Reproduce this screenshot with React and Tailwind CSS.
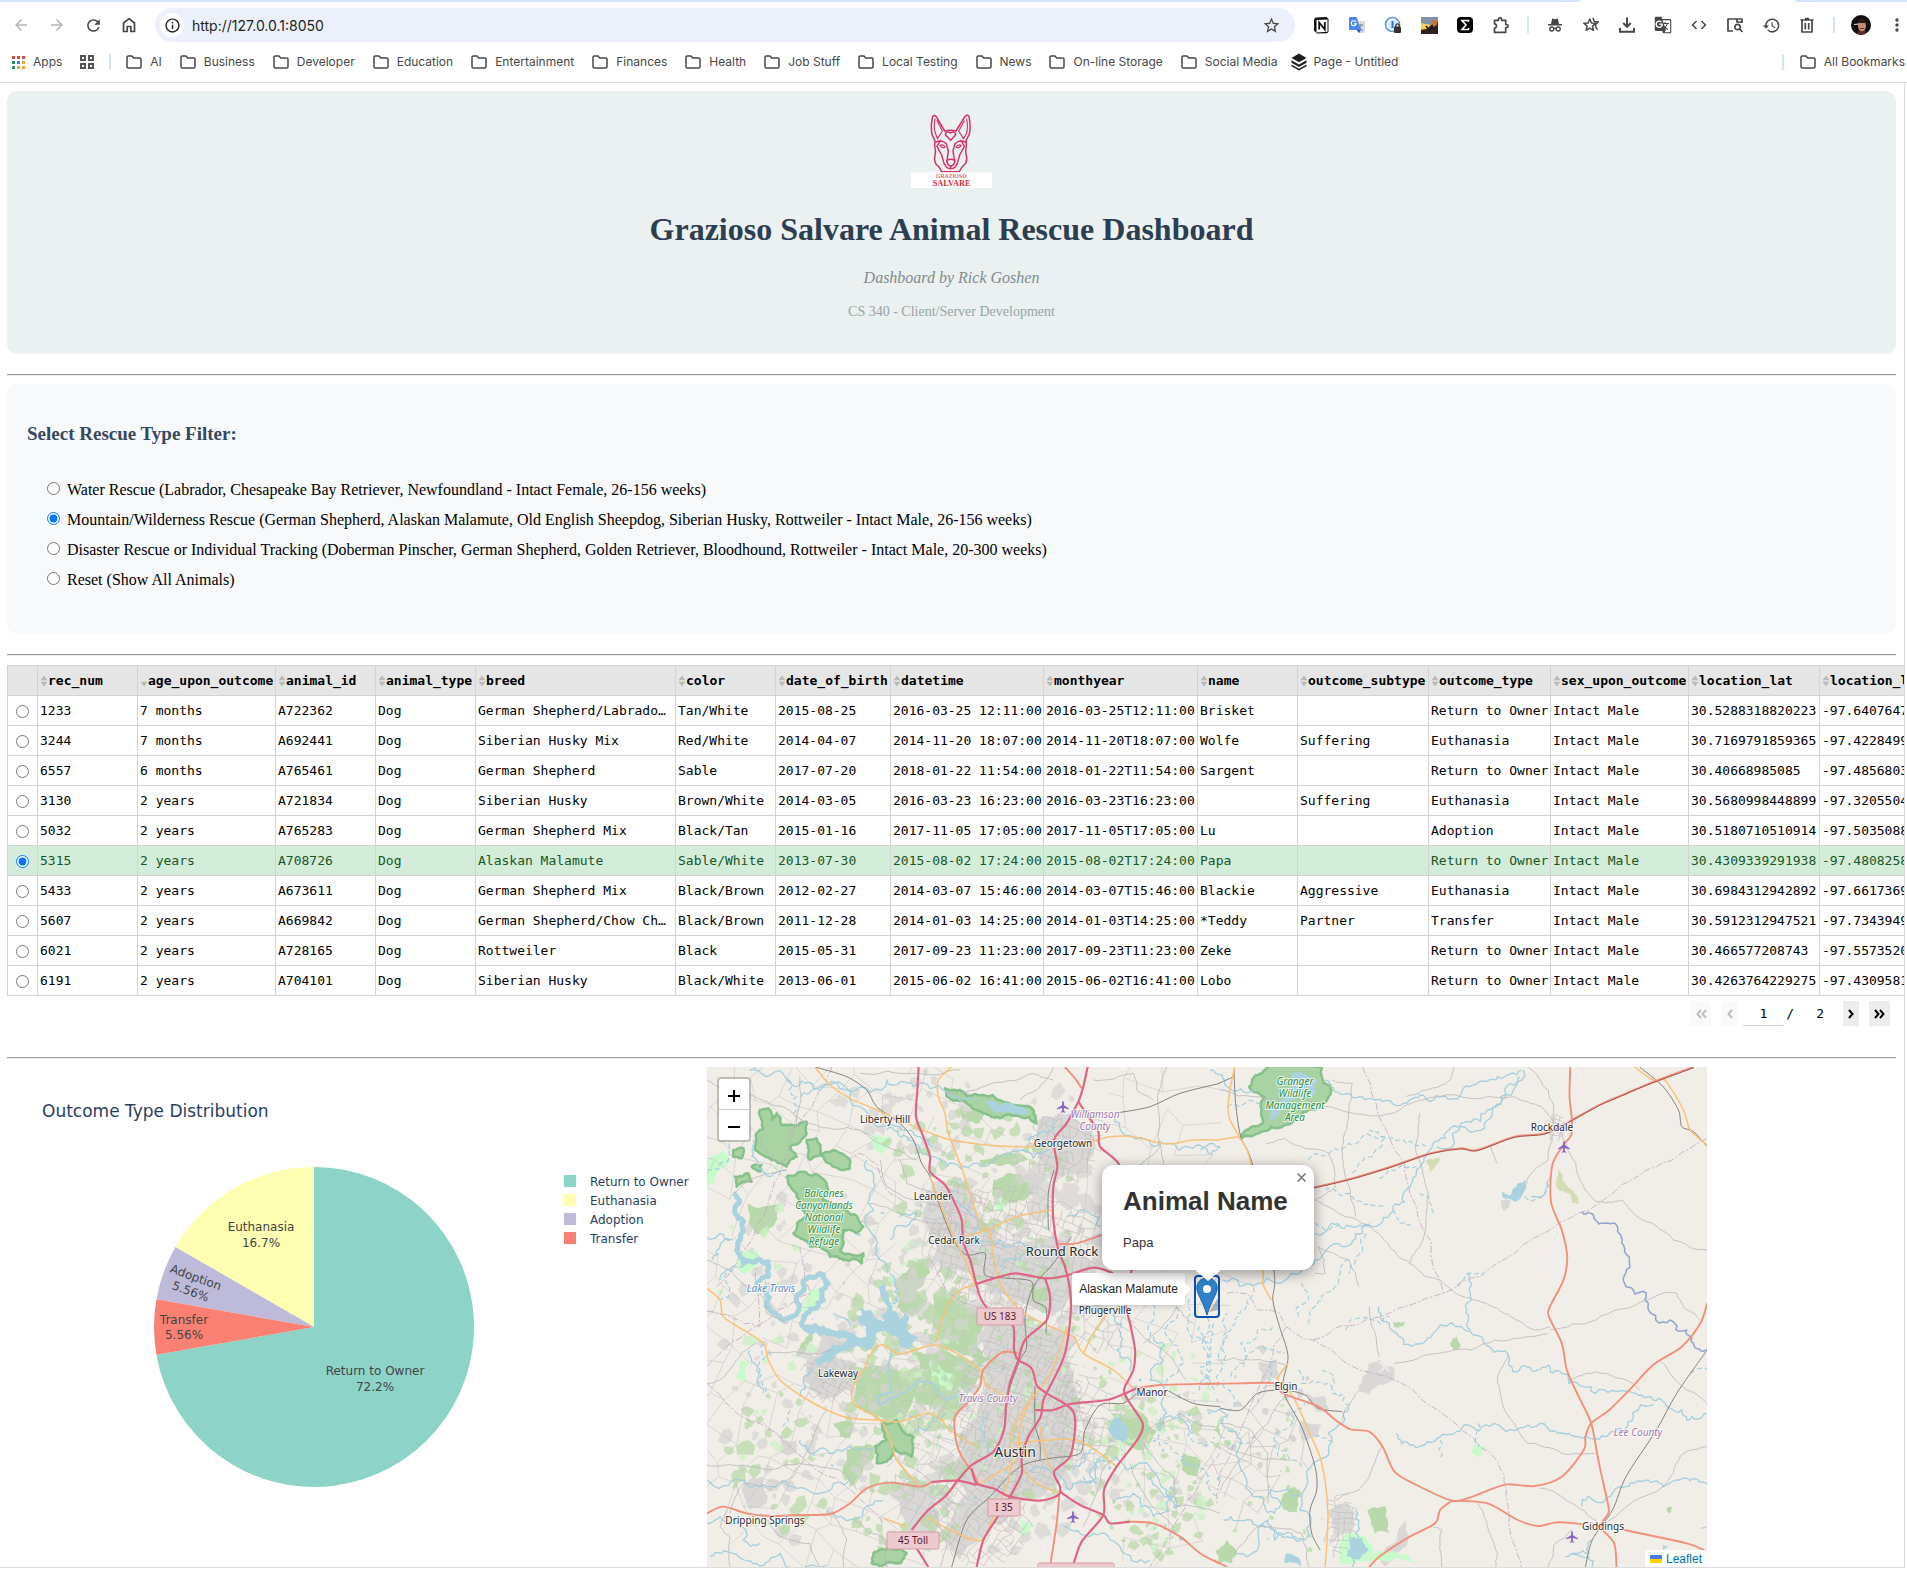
import React from "react";
import {
  MdArrowBack, MdArrowForward, MdRefresh, MdInfoOutline, MdStarBorder, MdCode,
  MdHistory, MdMoreVert, MdLocalAirport, MdGTranslate,
} from "react-icons/md";

/* ------------------------------ browser chrome ------------------------------ */

const stroke = { fill: "none", stroke: "currentColor", strokeWidth: 1.7, strokeLinejoin: "round" };

const Folder = () => (
  <svg width="16" height="14" viewBox="0 0 16 14" {...stroke} strokeWidth="1.5">
    <path d="M1 2.2c0-.7.5-1.2 1.200-1.200H6l1.700 1.900h6.100c.7 0 1.200.5 1.200 1.200v7.700c0 .7-.5 1.200-1.200 1.200H2.200C1.500 13 1 12.500 1 11.800z" />
  </svg>
);
const Home = () => (
  <svg width="18" height="18" viewBox="0 0 18 18" {...stroke}>
    <path d="M3.500 7 9 2.700 14.500 7v8.500h-3.700v-5H7.200v5H3.500z" />
  </svg>
);
const Notion = () => (
  <svg width="18" height="18" viewBox="0 0 18 18">
    <path d="M2 3l2-1.500 10.500-.5L16.500 3v13L15 17.300 5 17.500 2 14.500z" fill="#111" />
    <path d="M4.500 4 15.500 3.400V15.800L4.500 16.500z" fill="#fff" />
    <path d="M7.200 13.500V6.500l5.600 7V6" fill="none" stroke="#111" strokeWidth="1.800" />
  </svg>
);
const TranslateBlue = () => (
  <svg width="18" height="18" viewBox="0 0 18 18">
    <path d="M7 5h9a1 1 0 0 1 1 1v10a1 1 0 0 1-1 1h-5z" fill="#dadce0" />
    <path d="M10.500 9h5M13 8v1c0 2-1 3.500-3 5M11.500 11c1 2 2 3 3.500 3.500" stroke="#7b8794" fill="none" />
    <path d="M2 1h6.500L13 14H2a1 1 0 0 1-1-1V2a1 1 0 0 1 1-1z" fill="#4d86ec" />
    <path d="M7.800 5.800A2.500 2.500 0 1 0 8.200 7.800H6" stroke="#fff" fill="none" strokeWidth="1.200" />
    <path d="m8.500 14 2.500 3 2-3z" fill="#2859b8" />
  </svg>
);
const OnePassword = () => (
  <svg width="18" height="18" viewBox="0 0 18 18">
    <circle cx="8.500" cy="8.500" r="7" fill="#fff" stroke="#5b9be6" strokeWidth="1.700" />
    <circle cx="8.500" cy="8.500" r="4.800" fill="#dcebfb" />
    <path d="M8.500 5v7" stroke="#2675cf" strokeWidth="2" />
    <rect x="10" y="10.500" width="7" height="6.500" rx="1" fill="#333" />
    <path d="M11.800 11V9.500a1.700 1.700 0 0 1 3.400 0V11" fill="none" stroke="#333" strokeWidth="1.300" />
  </svg>
);
const Sunset = () => (
  <svg width="17" height="17" viewBox="0 0 17 17">
    <rect width="17" height="17" fill="#e8a33a" />
    <path d="M0 0h17v5L9 8 0 7z" fill="#7e93a8" />
    <path d="M0 6 10 8v3L0 12z" fill="#f6d35a" />
    <path d="M0 17v-4l6-1 4-4 7-3v12z" fill="#2b2220" />
    <path d="m5 9 3 4M9 13l3-5" stroke="#201815" strokeWidth="1.500" />
    <path d="M11 3h5v5l-4 2z" fill="#c9762c" />
  </svg>
);
const Sigma = () => (
  <svg width="18" height="18" viewBox="0 0 18 18">
    <rect x="1" y="1" width="16" height="16" rx="4" fill="#000" />
    <path d="M12.500 6V4.500H6L10 9l-4 4.500h6.500V12" fill="none" stroke="#fff" strokeWidth="1.600" />
  </svg>
);
const Puzzle = () => (
  <svg width="18" height="18" viewBox="0 0 18 18" {...stroke}>
    <path d="M2.500 4.300h4V3.500a1.600 1.600 0 0 1 3.200 0v.8h4v4.200h.8a1.600 1.600 0 0 1 0 3.200h-.8v4.600H2.500v-4.100c2.600-.4 2.600-4 0-4.400z" />
  </svg>
);
const Incognito = () => (
  <svg width="18" height="18" viewBox="0 0 18 18" fill="#474747">
    <path d="M6.200 2.500 9 3.200l2.800-.7L13 8H5z" />
    <path d="M2 8h14v1.500H2z" />
    <g fill="none" stroke="#474747" strokeWidth="1.400">
      <circle cx="5.800" cy="13" r="2" />
      <circle cx="12.200" cy="13" r="2" />
      <path d="M7.800 12.700c.8-.6 1.600-.6 2.400 0" />
    </g>
  </svg>
);
const StarPlus = () => (
  <svg width="18" height="18" viewBox="0 0 18 18" {...stroke} strokeWidth="1.500">
    <path d="m7.800 3 1.700 4 4.300.3-3.300 2.800 1 4.200-3.700-2.200-3.700 2.200 1-4.200L1.800 7.300 6.100 7z" />
    <path d="m11 1.800 1.200 3.700 4.300.4-3.200 2.700.8 3.400 1.600 1.500" />
  </svg>
);
const Download = () => (
  <svg width="18" height="18" viewBox="0 0 18 18" {...stroke} strokeWidth="2">
    <path d="M9 1.500v9M5.200 7 9 10.800 12.800 7M2 12v3.800h14V12" strokeLinejoin="miter" />
  </svg>
);
const SearchTab = () => (
  <svg width="18" height="18" viewBox="0 0 18 18" {...stroke}>
    <path d="M7 15H2V3h14v4M11 3v3h5" />
    <circle cx="11.500" cy="11" r="2.700" />
    <path d="m13.500 13 3 3" />
  </svg>
);
const Trash = () => (
  <svg width="18" height="18" viewBox="0 0 18 18" {...stroke}>
    <path d="M4 4.500V16h10V4.500M2.500 4h13M7 2.500h4M7.300 7v6.500M10.700 7v6.500" />
  </svg>
);
const Avatar = () => (
  <svg width="20" height="20" viewBox="0 0 20 20">
    <clipPath id="avatar"><circle cx="10" cy="10" r="10" /></clipPath>
    <g clipPath="url(#avatar)">
      <rect width="20" height="20" fill="#120d0d" />
      <path d="M6 20c0-4 2-5 5-5s6 2 6 5z" fill="#5a2c28" />
      <ellipse cx="11" cy="11" rx="4" ry="5.300" fill="#c88a75" />
      <path d="M6.500 8c0-6 9-6 9 0z" fill="#2a1a18" />
      <path d="M3 9.500l5-.5" stroke="#ddd" />
      <path d="M9 13.500h4" stroke="#7d3c34" />
    </g>
  </svg>
);
const Stack = () => (
  <svg width="16" height="18" viewBox="0 0 16 18" fill="#1f1f1f">
    <path d="m8 .5 7.500 4.500L8 9.300.5 5z" />
    <path d="M.5 7.300 8 11.600l7.500-4.300v2.400L8 14 .5 9.700z" />
    <path d="m.5 11.500 7.500 4.200 7.500-4.200v1.800L8 17.500.5 13.300z" />
  </svg>
);

const TOOLS = [
  ["Notion", <Notion />], ["Google Translate", <TranslateBlue />], ["1Password", <OnePassword />],
  ["Wallpaper", <Sunset />], ["Sigma", <Sigma />], ["Extensions", <Puzzle />],
];
const ACTIONS = [
  ["Incognito", <Incognito />], ["Add to favourites", <StarPlus />], ["Downloads", <Download />],
  ["Translate page", <MdGTranslate size={18} />], ["Developer tools", <MdCode size={18} />],
  ["Search tabs", <SearchTab />], ["History", <MdHistory size={19} />], ["Clear data", <Trash />],
];
const BOOKMARKS = [
  "AI", "Business", "Developer", "Education", "Entertainment", "Finances", "Health",
  "Job Stuff", "Local Testing", "News", "On-line Storage", "Social Media",
];
const APP_COLORS = ["#d64b41", "#d64b41", "#d64b41", "#2f8f5b", "#3f7fe0", "#e9a83a", "#2f8f5b", "#e9a83a", "#e9a83a"];

function IconButton({ label, children, className = "" }) {
  return (
    <button type="button" aria-label={label} className={"flex h-6 w-9 shrink-0 items-center justify-center " + className}>
      {children}
    </button>
  );
}

function Chrome() {
  return (
    <header className="border-b border-[#d9dbde] bg-white font-['Inter',sans-serif] text-[#474747]">
      <div className="flex h-[2px]">
        <div className="flex-1 rounded-br bg-[#d3e3fd]" />
        <div className="w-[215px]" />
        <div className="w-28 rounded-bl bg-[#d3e3fd]" />
      </div>
      <div className="flex h-[46px] items-center pl-[3px]">
        <IconButton label="Back" className="text-[#b4b4b4]"><MdArrowBack size={18} /></IconButton>
        <IconButton label="Forward" className="text-[#b4b4b4]"><MdArrowForward size={18} /></IconButton>
        <IconButton label="Reload"><MdRefresh size={19} /></IconButton>
        <IconButton label="Home"><Home /></IconButton>
        <div className="ml-2 flex h-[34px] flex-1 items-center rounded-full bg-[#ebf0fa] pl-[5px]">
          <button type="button" aria-label="Site information" className="flex size-6 items-center justify-center rounded-full bg-white text-[#1f1f1f]">
            <MdInfoOutline size={17} />
          </button>
          <input aria-label="Address" defaultValue="http://127.0.0.1:8050" className="ml-2 min-w-0 flex-1 bg-transparent text-[14px] text-[#1f1f1f] outline-none" />
          <IconButton label="Bookmark this page" className="mr-[6px]"><MdStarBorder size={19} /></IconButton>
        </div>
        <div className="ml-2 flex items-center">
          {TOOLS.map(([n, icon]) => <IconButton key={n} label={n}>{icon}</IconButton>)}
          <div className="mx-2 h-4 w-[2px] bg-[#d3e3fd]" />
          {ACTIONS.map(([n, icon]) => <IconButton key={n} label={n}>{icon}</IconButton>)}
          <div className="mx-2 h-4 w-[2px] bg-[#d3e3fd]" />
          <IconButton label="Profile"><Avatar /></IconButton>
          <button type="button" aria-label="Menu" className="flex h-6 w-7 shrink-0 items-center justify-center pl-2"><MdMoreVert size={20} /></button>
        </div>
      </div>
      <nav className="flex h-[34px] items-center pb-[6px] pl-3 text-[12px]">
        <a href="#apps" className="flex items-center gap-2">
          <span className="grid size-[13px] grid-cols-3 gap-[2px]">
            {APP_COLORS.map((c, i) => <span key={i} style={{ background: c }} />)}
          </span>
          Apps
        </a>
        <a href="#groups" aria-label="Tab groups" className="ml-[18px] grid size-[14px] grid-cols-2 gap-[2px]">
          {[0, 1, 2, 3].map((i) => <span key={i} className="border-2 border-[#555]" />)}
        </a>
        <div className="mx-[15px] h-4 w-[2px] bg-[#d3e3fd]" />
        <div className="flex flex-1 items-center gap-[18px]">
          {BOOKMARKS.map((b) => (
            <a key={b} href={"#" + b} className="flex shrink-0 items-center gap-2 whitespace-nowrap"><Folder />{b}</a>
          ))}
          <a href="#page" className="-ml-1 flex shrink-0 items-center gap-[6px] whitespace-nowrap"><Stack />Page - Untitled</a>
        </div>
        <div className="mx-4 h-4 w-[2px] bg-[#d3e3fd]" />
        <a href="#all" className="mr-[2px] flex items-center gap-2 whitespace-nowrap"><Folder />All Bookmarks</a>
      </nav>
    </header>
  );
}

/* ---------------------------------- logo ---------------------------------- */

function Logo() {
  return (
    <svg width="81" height="80" viewBox="0 0 243 240" role="img" aria-label="Grazioso Salvare">
      <g fill="none" stroke="#d03468" strokeWidth="4.500" strokeLinejoin="round" strokeLinecap="round">
        <path d="M101 60 76 17Q70 10 65 17 58 45 63 70L72 90 71 106Q75 118 73 130 68 142 74 158L84 168 92 182H145L153 168 165 156Q170 142 165 130 163 116 166 104L165 88 175 70Q180 45 174 16 168 9 161 18L135 60Q118 56 101 60Z" />
        <path d="M72 24Q67 50 73 66L80 84M78 28 94 60 80 82M167 24Q172 50 166 68L157 84M160 30 143 60 157 82" strokeWidth="3.500" />
        <path d="M104 66Q112 60 118 66 126 60 133 66 136 72 128 78L119 88 110 78Q101 72 104 66Z" />
        <path d="M73 94Q92 84 106 98L112 120 108 150M165 94Q146 84 132 98L126 120 131 150M88 88 78 106 92 132 100 160M150 88 160 106 146 132 138 160" />
        <path d="M87 103Q97 98 103 108 95 114 87 103ZM151 103Q141 98 135 108 143 114 151 103Z" strokeWidth="3.500" />
        <path d="M108 148Q119 142 131 148 132 158 124 164H115Q107 158 108 148ZM119 164V172M102 160Q105 172 119 173 134 172 137 160" />
      </g>
      <rect y="184" width="243" height="47" fill="#fff" />
      <g fontFamily="Liberation Serif, serif" fontWeight="bold" textAnchor="middle">
        <text x="121" y="201" fontSize="17" fill="#dc6470">GRAZIOSO</text>
        <text x="122" y="225" fontSize="25" fill="#d8303c">SALVARE</text>
      </g>
    </svg>
  );
}

/* ---------------------------------- table ---------------------------------- */

const COLS = [
  ["rec_num", 100], ["age_upon_outcome", 138], ["animal_id", 100], ["animal_type", 100], ["breed", 200],
  ["color", 100], ["date_of_birth", 115], ["datetime", 153], ["monthyear", 154], ["name", 100],
  ["outcome_subtype", 131], ["outcome_type", 122], ["sex_upon_outcome", 138], ["location_lat", 131], ["location_long", 139],
];
const TABLE_WIDTH = COLS.reduce((sum, [, w]) => sum + w, 30);
const ROWS = [
  ["1233", "7 months", "A722362", "German Shepherd/Labrador Retriever", "Tan/White", "2015-08-25", "2016-03-25", "12:11:00", "Brisket", "", "Return to Owner", "30.5288318820223", "-97.6407647"],
  ["3244", "7 months", "A692441", "Siberian Husky Mix", "Red/White", "2014-04-07", "2014-11-20", "18:07:00", "Wolfe", "Suffering", "Euthanasia", "30.7169791859365", "-97.4228499"],
  ["6557", "6 months", "A765461", "German Shepherd", "Sable", "2017-07-20", "2018-01-22", "11:54:00", "Sargent", "", "Return to Owner", "30.40668985085", "-97.4856803"],
  ["3130", "2 years", "A721834", "Siberian Husky", "Brown/White", "2014-03-05", "2016-03-23", "16:23:00", "", "Suffering", "Euthanasia", "30.5680998448899", "-97.3205504"],
  ["5032", "2 years", "A765283", "German Shepherd Mix", "Black/Tan", "2015-01-16", "2017-11-05", "17:05:00", "Lu", "", "Adoption", "30.5180710510914", "-97.5035088"],
  ["5315", "2 years", "A708726", "Alaskan Malamute", "Sable/White", "2013-07-30", "2015-08-02", "17:24:00", "Papa", "", "Return to Owner", "30.4309339291938", "-97.4808258"],
  ["5433", "2 years", "A673611", "German Shepherd Mix", "Black/Brown", "2012-02-27", "2014-03-07", "15:46:00", "Blackie", "Aggressive", "Euthanasia", "30.6984312942892", "-97.6617369"],
  ["5607", "2 years", "A669842", "German Shepherd/Chow Chow", "Black/Brown", "2011-12-28", "2014-01-03", "14:25:00", "*Teddy", "Partner", "Transfer", "30.5912312947521", "-97.7343949"],
  ["6021", "2 years", "A728165", "Rottweiler", "Black", "2015-05-31", "2017-09-23", "11:23:00", "Zeke", "", "Return to Owner", "30.466577208743", "-97.5573520"],
  ["6191", "2 years", "A704101", "Siberian Husky", "Black/White", "2013-06-01", "2015-06-02", "16:41:00", "Lobo", "", "Return to Owner", "30.4263764229275", "-97.4309581"],
];

function DataTable() {
  return (
    <table style={{ width: TABLE_WIDTH }} className="mt-[9px] table-fixed border-collapse font-['DejaVu_Sans_Mono','Liberation_Mono',monospace] text-[13px] leading-5 text-black">
      <colgroup>
        <col style={{ width: 30 }} />
        {COLS.map(([n, w]) => <col key={n} style={{ width: w }} />)}
      </colgroup>
      <thead>
        <tr className="h-[30px] bg-[#e6e6e6]">
          <th className="border border-[#d3d3d3]" aria-label="Select" />
          {COLS.map(([n]) => (
            <th key={n} scope="col" className="border border-[#d3d3d3] pl-[2px] text-left font-bold whitespace-nowrap">
              <button type="button" className="flex items-center">
                <svg width="8" height="12" viewBox="0 0 8 12" fill="#b9b9b9" className="shrink-0">
                  {n !== "age_upon_outcome" && <path d="M.5 5.200 4 .5l3.500 4.700z" />}
                  <path d="M.5 6.800 4 11.500l3.500-4.700z" />
                </svg>
                {n}
              </button>
            </th>
          ))}
        </tr>
      </thead>
      <tbody>
        {ROWS.map((r) => {
          const on = r[0] === "5315";
          const cells = [r[0], r[1], r[2], "Dog", r[3], r[4], r[5], r[6] + " " + r[7], r[6] + "T" + r[7], r[8], r[9], r[10], "Intact Male", r[11], r[12]];
          return (
            <tr key={r[0]} className={on ? "h-[30px] bg-[#d4edda] text-[#155724]" : "h-[30px]"}>
              <td className="border border-[#d3d3d3]">
                <input type="radio" name="row" aria-label={"Select record " + r[0]} defaultChecked={on} className="mx-auto mt-[2px] block size-[13px]" />
              </td>
              {cells.map((c, i) => (
                <td key={i} className={"border border-[#d3d3d3] pl-[2px] whitespace-nowrap" + (i === 4 ? " overflow-hidden pr-1 text-ellipsis" : "")}>{c}</td>
              ))}
            </tr>
          );
        })}
      </tbody>
    </table>
  );
}

function Pagination() {
  const btn = "flex h-[25px] items-center justify-center ";
  const chev = (double) => (
    <svg width={double ? 12 : 6} height="10" viewBox={double ? "0 0 12 10" : "0 0 6 10"} fill="none" stroke="currentColor" strokeWidth="2">
      <path d="m1 1 3.500 4L1 9" />
      {double && <path d="m6 1 3.500 4L6 9" />}
    </svg>
  );
  return (
    <div className="mt-[5px] flex items-center justify-end pr-[6px] font-['DejaVu_Sans_Mono',monospace] text-[13px] text-black">
      <button type="button" aria-label="First page" disabled className={btn + "w-[21px] bg-[#fafafa] text-[#bdbdbd]"}><span className="rotate-180">{chev(true)}</span></button>
      <button type="button" aria-label="Previous page" disabled className={btn + "ml-[10px] w-[17px] bg-[#fafafa] text-[#bdbdbd]"}><span className="rotate-180">{chev(false)}</span></button>
      <input aria-label="Page" defaultValue="1" className="ml-[5px] h-[25px] w-10 border-b border-[#cfcfcf] bg-transparent text-center outline-none" />
      <span className="ml-[3px]">/</span>
      <span className="mr-[19px] ml-[22px]">2</span>
      <button type="button" aria-label="Next page" className={btn + "w-4 bg-[#ededed]"}>{chev(false)}</button>
      <button type="button" aria-label="Last page" className={btn + "ml-[10px] w-[21px] bg-[#ededed]"}>{chev(true)}</button>
    </div>
  );
}

/* ----------------------------------- pie ----------------------------------- */

const SLICES = [
  ["Return to Owner", 0, 260, "#8dd3c7"],
  ["Euthanasia", 300, 360, "#ffffb3"],
  ["Adoption", 280, 300, "#bebada"],
  ["Transfer", 260, 280, "#f98072"],
];
const polar = (deg) => {
  const a = (deg * Math.PI) / 180;
  return `${307 + 160 * Math.sin(a)} ${260 - 160 * Math.cos(a)}`;
};

function Pie() {
  return (
    <svg width="700" height="500" viewBox="0 0 700 500" role="img" aria-label="Outcome Type Distribution" className="shrink-0" fontFamily="DejaVu Sans, Verdana, sans-serif" fontSize="12">
      <text x="35" y="50" fontSize="17" fill="#2a3f5f">Outcome Type Distribution</text>
      {SLICES.map(([n, a, b, c]) => (
        <path key={n} d={`M307 260L${polar(a)}A160 160 0 ${b - a > 180 ? 1 : 0} 1 ${polar(b)}Z`} fill={c} />
      ))}
      <g fill="#444" textAnchor="middle">
        <text x="368" y="308">Return to Owner</text>
        <text x="368" y="324">72.2%</text>
        <text x="254" y="164">Euthanasia</text>
        <text x="254" y="180">16.7%</text>
        <text x="177" y="257">Transfer</text>
        <text x="177" y="272">5.56%</text>
        <g transform="rotate(20 186 218)">
          <text x="186" y="214">Adoption</text>
          <text x="186" y="229">5.56%</text>
        </g>
      </g>
      {SLICES.map(([n, , , c], i) => (
        <g key={n}>
          <rect x="557" y={108 + i * 19} width="12" height="12" fill={c} />
          <text x="583" y={119 + i * 19} fill="#2a3f5f">{n}</text>
        </g>
      ))}
    </svg>
  );
}

/* ----------------------------------- map ----------------------------------- */

function rng(seed) {
  let s = seed >>> 0;
  return () => {
    s = (s * 1664525 + 1013904223) >>> 0;
    return s / 4294967296;
  };
}
const parse = (str) => str.trim().split(/\s+/).map((p) => p.split(",").map(Number));

/* Splits every segment at a displaced midpoint, which gives streams and shores their wobble. */
function wobble(str, amp, closed) {
  let pts = parse(str);
  if (closed) pts = [...pts, pts[0]];
  const r = rng(pts[0][0] * 31 + pts[0][1] * 17 + pts.length);
  for (let k = 0; k < 3; k++) {
    const out = [pts[0]];
    for (let i = 1; i < pts.length; i++) {
      const [x0, y0] = pts[i - 1];
      const [x1, y1] = pts[i];
      const d = Math.hypot(x1 - x0, y1 - y0);
      const o = (r() - 0.5) * amp * d;
      if (d > 9) out.push([(x0 + x1) / 2 - ((y1 - y0) / d) * o, (y0 + y1) / 2 + ((x1 - x0) / d) * o]);
      out.push(pts[i]);
    }
    pts = out;
  }
  return "M" + pts.map((p) => p.map((v) => Math.round(v)).join(" ")).join("L") + (closed ? "Z" : "");
}
/* Smooth curve through the given points. */
function smooth(str) {
  const p = parse(str);
  let d = `M${p[0]}`;
  for (let i = 1; i < p.length; i++) {
    const a = p[i - 2] || p[i - 1], b = p[i - 1], c = p[i], e = p[i + 1] || c;
    d += `C${b[0] + (c[0] - a[0]) / 7} ${b[1] + (c[1] - a[1]) / 7} ${c[0] - (e[0] - b[0]) / 7} ${c[1] - (e[1] - b[1]) / 7} ${c[0]} ${c[1]}`;
  }
  return d;
}
/* Patches scattered over an ellipse. */
function patches(cx, cy, rx, ry, n, size, seed) {
  const r = rng(seed);
  let d = "";
  for (let i = 0; i < n; i++) {
    const a = r() * 6.28, q = Math.sqrt(r());
    const x = cx + Math.cos(a) * rx * q, y = cy + Math.sin(a) * ry * q;
    const s = size * (0.4 + r());
    const t = r() * 1.2;
    const k = 5 + Math.floor(r() * 4);
    let seg = "";
    for (let j = 0; j < k; j++) {
      const b = t + (j / k) * 6.28, m = s * (0.4 + r() * 0.8);
      seg += (j ? "L" : "M") + Math.round(x + Math.cos(b) * m) + " " + Math.round(y + Math.sin(b) * m);
    }
    d += seg + "Z";
  }
  return d;
}
/* Slanted street grid over an ellipse with bends and missing blocks. */
function streets(cx, cy, rx, ry, step, tilt, seed) {
  const r = rng(seed);
  const n = Math.ceil(Math.max(rx, ry) / step);
  const c = Math.cos(tilt), s = Math.sin(tilt);
  const node = {};
  const at = (i, j) => {
    const key = i + "," + j;
    if (!node[key]) {
      const u = (i + (r() - 0.5) * 0.7) * step, v = (j + (r() - 0.5) * 0.7) * step;
      node[key] = [Math.round(cx + u * c - v * s), Math.round(cy + u * s + v * c)];
    }
    return node[key];
  };
  const inside = ([x, y]) => ((x - cx) / rx) ** 2 + ((y - cy) / ry) ** 2 < 1;
  let d = "";
  for (let i = -n; i <= n; i++)
    for (let j = -n; j <= n; j++) {
      const p = at(i, j);
      if (!inside(p)) continue;
      if (r() < 0.75) d += `M${p[0]} ${p[1]}L${at(i + 1, j).join(" ")}`;
      if (r() < 0.75) d += `M${p[0]} ${p[1]}L${at(i, j + 1).join(" ")}`;
    }
  return d;
}

const W = {
  motorway: [
    "656,21 652,90 648,170 668,225 690,290 690,335 735,375 765,430 785,480 790,545 812,605 828,670 842,715 862,745 900,780 940,800 942,870 955,900 995,925 1010,975 1040,1000 1100,1035 1122,1060 1125,1110 1110,1190 1062,1235 1080,1280 1075,1305 1020,1322 930,1310 880,1285 830,1270 815,1225",
    "1163,21 1150,80 1135,125 1100,190 1062,240 1072,320 1060,380 1060,480 1075,570 1095,620 1110,690 1112,760 1095,880 1060,960 1030,1020 1022,1070 985,1130 965,1190 965,1240 930,1310 890,1375 850,1440 830,1521",
    "1135,125 1165,170 1195,215 1200,260 1255,310 1290,400 1295,520 1295,630 1270,700 1290,790 1305,870 1300,930 1272,990 1290,1030 1328,1090 1315,1135 1250,1220 1212,1290 1210,1365 1145,1445 1118,1521",
    "828,672 900,650 950,640 1035,655 1095,648 1180,623 1240,640",
    "1035,655 1050,710 1040,780 975,840 955,900 930,970 918,1040 912,1110 880,1175 815,1215 770,1265 740,1305 680,1355 635,1410",
    "695,1266 770,1262 830,1275",
    "1005,1050 1060,1050 1110,1032 1220,1020 1275,1000 1310,985",
    "650,1465 685,1521",
    "1080,1295 1140,1335 1210,1365 1230,1390 1290,1385",
  ],
  trunk: [
    "21,1360 70,1340 140,1360 210,1368 290,1365 390,1362 450,1330 500,1285 570,1268 660,1280 695,1266",
    "1310,985 1380,975 1560,970",
    "1290,1385 1360,1390 1440,1430 1500,1480 1560,1512",
    "1095,21 1125,55 1145,85",
    "955,880 905,878 850,930 840,980 800,1030 765,1070 768,1140 785,1190 820,1240 835,1275",
    "1078,1300 1070,1390 1050,1521",
    "1075,552 1130,550 1205,525",
  ],
  primary: [
    "345,21 390,75 450,115 520,145 620,190 720,230 765,242 900,258 1060,258 1170,245 1230,230 1300,230 1400,252 1480,240 1560,240",
    "755,21 715,60 715,110 735,160 745,220 780,310 810,400 840,490 870,520 880,590 900,670 960,750 1050,800 1120,830 1150,880 1240,930 1300,985",
    "790,530 860,510 950,470 1055,450",
    "690,350 740,480 790,590 825,670",
    "21,685 60,720 70,770 130,810 190,850 205,900 240,960 300,1005 380,1050 450,1075 540,1080 600,1085 680,1060 720,1075 750,1110 830,1160",
    "460,1035 455,990 490,930 520,870 550,855 600,882 700,855 770,880 840,930 860,975 920,1010",
    "705,850 740,740 780,690 825,675",
    "460,1035 540,1080 575,1150 590,1200 655,1275",
    "1220,760 1180,820 1150,880",
    "1100,800 1080,870 1040,960 970,1050 930,1130 935,1200 920,1280 890,1340 845,1440 750,1410 680,1370",
    "550,1375 620,1400",
    "940,1150 1050,1140 1130,1140 1200,1180 1250,1220",
    "960,1220 1010,1270 1080,1300",
    "830,1275 900,1235 950,1200 960,1100 1000,1000",
    "1020,1100 1040,1200 1060,1230",
  ],
  rail: [
    "345,21 440,50 500,90 530,140 600,190 640,240 665,310 690,350 720,440 760,540 800,585 855,580 855,645 930,655 995,665 1000,720 1038,745 1038,820",
    "1560,70 1440,100 1350,140 1255,158",
    "1115,530 1060,610 1000,680 975,770 980,860 960,900 925,1000 915,1100",
    "1400,990 1480,1030 1560,1040",
    "1310,1000 1270,1030 1200,1035 1155,1110 1140,1180 1050,1195 960,1220 870,1310 800,1380 755,1521",
    "1045,510 1045,400 1062,330",
    "1005,980 1005,1090 1020,1150 1020,1200",
  ],
  county: [
    "395,21 350,110 240,340 190,470 110,610 50,680",
    "21,755 90,770 180,800 170,620",
    "300,560 330,700 150,810 21,920",
    "21,970 180,1090 350,1230 550,1390",
    "690,600 740,690 860,750 980,780",
    "1560,1180 1490,1290 1400,1440 1350,1521",
    "440,300 480,280 530,310 560,390 620,430",
  ],
  minor: [
    "21,60 120,100 250,140 330,190 480,210 560,260 650,300",
    "100,400 190,345 260,330", "180,230 210,290 240,310", "21,600 90,630 180,700 200,760 260,790",
    "170,850 110,900 60,960 21,970", "200,880 310,880 400,870", "380,1050 330,1160 280,1250 210,1290 130,1270 90,1360",
    "21,1215 130,1215 200,1230 300,1210 420,1230 470,1290", "90,1521 90,1430 60,1400 80,1350",
    "400,1370 440,1440 430,1521", "180,1360 230,1420 330,1450 360,1521", "300,50 290,180 260,240",
    "480,40 640,40 780,30", "740,100 850,80 1000,40 1060,60", "1180,60 1300,40 1310,90 1360,120",
    "1200,260 1280,340 1380,260 1400,21", "1380,250 1390,320", "1330,850 1430,740 1480,790",
    "1340,1110 1440,1060 1560,1110", "1330,1150 1420,1250 1430,1340 1560,1360",
    "1290,1210 1350,1330 1420,1400", "1060,20 1010,90 960,120", "540,300 560,380 640,420 740,440",
    "510,430 600,460 700,490 780,500", "600,300 620,370 730,420", "1280,780 1400,880 1460,960",
    "1230,1200 1190,1300 1150,1400", "460,1380 560,1440 560,1521", "700,1350 740,1450 720,1521",
  ],
  creek: [
    "21,530 60,520 100,540", "150,30 200,50 290,80 360,90 480,140 520,190 600,200 660,230 700,260",
    "300,110 340,90 450,95 560,60 640,80 740,95 830,120", "160,240 170,300 210,350 260,330",
    "560,210 620,230 690,290 740,320 820,310 900,290 1000,295 1050,270", "500,300 510,400 500,500 530,570 560,640",
    "740,380 780,440 830,480 850,560", "21,1260 120,1260 200,1280 290,1285 400,1270 450,1250",
    "300,1140 330,1180 400,1180 450,1160 520,1170", "21,1390 60,1370 130,1440 180,1450",
    "30,1490 100,1480 170,1510 240,1480 380,1515", "380,1350 450,1380 490,1350 550,1320",
    "1240,170 1265,215 1330,235 1400,250 1480,265 1560,260", "1060,180 1040,220 980,240",
    "1240,760 1260,830 1250,870 1290,930", "1360,830 1390,900 1350,960 1400,1060 1380,1110 1440,1060 1480,1120",
    "990,560 930,560 860,545 790,580", "860,1060 840,1110 850,1140 900,1190 980,1240 1040,1225 1110,1290 1180,1260 1200,1200 1280,1230 1400,1290 1440,1340",
    "1350,1250 1420,1310 1360,1370 1300,1300 1240,1330",
    "600,470 650,460 620,500 570,540", "570,640 590,680 575,730", "340,920 310,960 300,1010",
    "640,1120 690,1100 740,1060", "450,800 420,770 400,760", "1200,500 1170,460 1100,470",
    "900,620 960,600 1010,560", "150,870 180,930 190,1000", "1090,1400 1180,1420 1260,1460 1350,1500",
    "90,540 60,560 40,600", "100,620 70,640 60,660", "1200,1190 1170,1230 1190,1270 1150,1250", "1120,1230 1150,1180 1190,1170",
  ],
  dash: [
    "21,330 60,320 90,290 85,240", "130,620 80,640 60,720", "190,850 170,920 200,1010", "1340,720 1360,780 1350,850",
    "1420,720 1400,800 1440,880 1400,980", "1450,700 1460,800 1520,900 1500,1000", "1500,800 1520,860 1530,980",
    "1460,1080 1500,1150 1560,1170", "1440,1200 1520,1240 1560,1300", "270,1050 250,1100", "260,60 290,110 270,160",
    "1540,790 1530,900 1545,1000", "1370,1100 1430,1180 1500,1220",
  ],
  lake: [
    "100,400 105,460 125,520 110,570 130,610 170,600 205,605 205,650 170,680",
    "190,690 200,740 250,780 300,700 330,650 360,640 385,670 370,720 320,760 310,800 380,815",
  ],
  river: ["575,880 568,940 580,1000 530,1010 540,1035 600,1005 650,965 700,970 740,1020 780,1000"],
  wide: ["605,830 580,800 555,760"],
  forest: [
    "180,150 205,145 215,180 230,160 245,195 320,185 320,220 270,260 290,290 260,320 220,300 165,270 170,220 190,205",
    "305,335 380,370 370,420 440,450 490,500 470,520 430,510 420,570 490,580 485,610 430,600 390,590 330,560 280,520 320,470 290,400 260,350",
    "320,240 350,235 360,280 400,270 450,300 450,325 400,320 370,290 330,300",
    "735,85 780,90 800,110 850,105 900,120 1000,150 1010,190 960,170 900,175 850,160 800,130 740,110",
    "545,1090 590,1080 605,1110 640,1130 635,1190 600,1180 580,1160 560,1205 530,1210 525,1160 560,1140",
    "520,1480 570,1465 620,1480 600,1510 540,1521 515,1510",
    "100,270 130,265 125,295 100,290", "105,350 145,340 155,365 110,380", "155,320 185,315 180,335",
  ],
  wood: [
    "140,430 240,430 225,490 190,530 150,500", "590,660 640,610 690,590 690,640 650,690 680,730 640,770 590,740",
    "700,700 760,720 820,740 850,800 830,860 880,900 840,920 780,880 720,860 700,800",
    "480,940 570,910 600,950 640,1000 620,1060 560,1080 500,1060 460,1010",
    "880,360 960,340 1000,400 940,430 880,410", "840,300 940,280 1000,300 940,320 850,320",
    "990,690 1040,680 1045,720 1000,740", "780,150 850,150 840,190 790,180", "400,1090 460,1090 450,1135 420,1130",
    "440,1170 520,1160 490,1230 450,1280", "1230,1060 1330,1060 1370,1110 1330,1170 1270,1150",
    "1450,1180 1500,1200 1490,1250 1445,1230", "300,860 350,790 320,870 290,890", "700,1220 780,1200 800,1250 740,1270",
    "640,960 730,920 780,960 790,1050 720,1040 650,1030", "640,880 720,870 800,900 840,950 800,1000 740,950 660,930",
    "740,740 800,750 830,790 800,830 750,800",
  ],
  park: [
    "520,225 580,220 570,260 540,280 515,250", "900,410 930,420 905,460 885,430", "21,300 70,270 90,300 40,370 21,380",
    "110,580 170,570 180,610 130,640", "120,900 150,905 140,970 105,950", "690,900 720,920 770,950 760,1030 730,1000",
    "330,690 370,680 350,740 290,760", "960,1380 1000,1390 990,1430 960,1420",
  ],
  urban: [
    "680,390 800,360 830,480 900,540 1000,540 1060,520 1130,560 1190,640 1120,700 1060,760 940,720 870,700 800,640 700,600 670,480",
    "1010,180 1110,160 1180,230 1150,330 1050,340 1000,260",
    "860,760 950,760 1130,830 1130,1000 1120,1150 1060,1280 960,1330 860,1420 780,1500 740,1400 800,1300 780,1120 850,1000 850,880",
    "320,900 470,910 460,980 360,1020 310,960", "130,1270 190,1250 200,1330 150,1350", "560,1270 700,1270 720,1400 640,1450 600,1340",
    "1290,980 1340,990 1330,1030 1290,1020", "940,350 1000,330 1040,360 1000,400",
    "360,820 450,840 430,880 340,880", "240,1140 290,1140 290,1180 240,1180",
  ],
  water: [
    "478,742 512,750 528,775 556,785 560,755 548,720 535,680 552,668 566,705 578,752 602,778 612,760 628,770 622,805 655,832 628,868 598,858 590,832 572,826 556,812 530,818 522,848 512,868 470,858 440,872 410,882 398,902 352,918 345,900 380,868 425,856 442,838 398,828 340,812 306,808 310,796 380,805 440,812 480,834 500,828 498,800 478,790 470,775 488,765",
    "1235,1085 1255,1070 1285,1110 1270,1150 1240,1135 1225,1110",
    "850,120 900,135 960,140 990,165 960,165 910,160 870,145",
  ],
};

const E = {
  trunk: [
    "1125,21 1123,110 1130,180 1128,225 1105,255 1072,315 1068,425 1100,510 1116,590 1105,660 1065,740 1062,770 1100,850 1115,930 1150,1010 1187,1090 1210,1210 1238,1340 1235,1365 1215,1400 1255,1450 1262,1521",
    "30,972 150,970 250,970 275,1000 380,1040 430,1080 475,1108 530,1115 570,1160 605,1235 670,1275 775,1322 830,1312 890,1288 940,1273 1020,1278 1100,1250 1165,1170 1170,1130 1187,1090 1240,1050 1300,990 1370,915 1455,860 1510,790 1530,730",
    "775,1322 880,1330 970,1380 1030,1398 1085,1387 1160,1392", "1285,1410 1470,1450 1530,1475",
    "775,1322 740,1350 725,1390 650,1430 560,1490 530,1521", "70,1500 110,1521",
    "367,382 480,355 600,318 710,280 800,265 850,270 960,230 1050,220 1130,180 1210,135 1290,100 1360,70 1490,21",
  ],
  primary: [
    "132,21 115,110 115,170 145,230 180,310 215,630 215,670 240,720", "290,910 260,960 305,1010 350,1110 390,1210 408,1360 400,1521",
    "1315,21 1370,60 1405,60 1460,150 1480,210 1530,255", "80,240 145,230",
  ],
  rail: [
    "130,30 135,130 150,230 185,315 248,630 245,720 265,800 290,890 275,990 330,1100 370,1220 375,1290 355,1350 360,1420 385,1470",
    "1530,870 1440,1000 1380,1110 1290,1250 1250,1350 1190,1440 1170,1521", "1330,21 1400,80 1445,150 1455,200 1490,215 1530,260",
    "90,1045 150,1050 200,1000 275,990 340,1005 380,1045 450,1055", "85,70 130,50",
  ],
  brown: ["367,384 480,357 600,320 710,282 800,267 850,272 960,232 1050,222 1130,182 1210,137 1290,102 1360,72 1490,23"],
  county: [
    "510,21 590,230 650,400 750,700", "365,840 540,775 750,700 960,580 1180,450 1380,320 1530,235",
    "285,800 365,840 560,945 700,1030 910,1205 945,1370 980,1521", "285,800 230,930 130,1150 80,1330", "110,700 170,700 200,750 265,760 285,800",
  ],
  minor: [
    "90,90 200,110 400,140 520,165 620,150 690,120 880,110 960,110 1040,140 1075,190", "420,60 480,70 470,150 450,260 460,350 490,470",
    "225,250 280,235 410,280 430,380 370,420", "370,420 440,460 530,500 590,560 650,610 750,670 840,720 930,760 1020,810 1065,800",
    "680,160 670,280 705,400 680,560 650,610", "640,110 700,90 770,60 780,21", "1000,21 1060,90 1075,190 1060,300 1010,340 990,380",
    "1100,190 1150,350 1200,425 1280,420 1340,480 1430,540 1530,570", "1065,810 1200,780 1350,720 1440,700 1470,750 1510,780",
    "1060,820 900,840 830,870 700,885 605,910", "940,880 910,950 950,1080 1000,1150 1100,1180 1200,1180", "530,740 560,890",
    "490,1000 450,1080", "1120,960 1230,940 1330,990", "1390,900 1530,1030", "1235,1385 1400,1280 1450,1190 1530,1160",
    "1035,1285 1130,1330 1200,1380 1220,1400", "850,1330 880,1400 910,1480 905,1521", "720,1400 745,1410 745,1521",
    "570,1160 540,1220 500,1290 430,1320", "370,640 400,640 380,560 470,600 500,680", "890,260 910,310", "90,1090 180,1110 230,1180 230,1330",
    "270,1020 190,1130 90,1290", "80,900 180,900 290,920", "90,1150 300,1200", "1510,1405 1530,1400", "1130,1410 1080,1450 1060,1521",
    "130,1480 200,1400 330,1420 350,1521",
  ],
  creek: [
    "60,30 110,80 190,90", "400,60 430,95 500,110 570,125 650,120 710,125 800,105 850,70 910,50 980,30",
    "975,50 930,90 880,150 820,185 760,215 710,270 670,340 640,390 600,440 540,500 480,500 420,490 370,520",
    "985,30 920,110 880,180 800,200 730,260", "95,660 200,670 300,640 370,600 450,560 510,520 530,490",
    "560,740 590,790 620,830 700,840 720,820 830,815 870,850 940,880 955,935 1010,930 1060,915 1100,940 1120,970 1200,1000 1300,995 1370,1020 1420,1045 1470,1080 1530,1060",
    "610,1120 660,1155 740,1130 810,1095 900,1090 1000,1095 1090,1120 1150,1130 1230,1130 1290,1110 1310,1060 1370,1035",
    "1160,1340 1180,1310 1270,1280 1340,1265 1400,1280 1480,1262 1530,1275", "1060,360 1050,400 1010,410", "820,640 830,700 815,740 830,810",
    "90,1040 100,1100 150,1150 160,1240 200,1310 250,1360 240,1290 330,1310 340,1440 290,1430 230,1380 170,1490 140,1480",
    "100,1380 180,1380 230,1400 250,1440 330,1440", "90,1050 50,1050", "470,1040 450,1090 410,1170 380,1200 330,1310",
    "1110,1490 1180,1480 1190,1440", "1130,1480 1180,1490 1190,1521", "480,1521 500,1440 490,1350", "90,260 30,270",
  ],
  blue: ["1160,455 1200,480 1250,490 1275,530 1300,600 1290,680 1350,700 1355,745 1420,780 1470,810 1490,850 1530,870"],
  dash: [
    "350,300 420,270 500,245 560,235 640,250 700,260", "400,390 470,400 530,430 580,440", "370,490 440,495", "600,450 620,490 660,500",
    "480,340 540,290 580,230 530,210", "560,355 620,320 670,320", "680,400 710,430 715,470", "320,770 350,720 330,670", "470,600 440,660 390,720 350,790",
    "100,900 110,820 140,760 170,720 180,670", "120,950 150,850 200,810 250,800", "160,920 190,870 240,870 280,880", "200,1030 240,950 260,900",
    "60,850 50,770", "80,980 90,870 110,760", "90,1090 130,1010 100,960", "250,1140 290,1190 330,1220", "370,1130 420,1160", "390,930 420,1000 480,1040",
    "320,930 330,970 420,980", "460,810 530,780 590,770", "790,680 850,640 870,640", "740,1140 740,1200", "850,1090 855,1160", "110,140 200,130 240,150",
    "90,1130 200,1130", "990,410 1050,400 1065,350", "1480,940 1530,930", "260,1190 300,1060 340,1030", "520,520 510,560 470,640",
  ],
  forest: ["190,50 230,21 390,21 395,70 415,75 410,110 350,150 300,190 240,200 190,225 150,235 160,215 215,190 220,110 175,80"],
  wood: ["525,1350 580,1340 585,1380 590,1420 545,1420", "75,1470 110,1440 140,1480 120,1510 85,1510", "270,1320 310,1280 330,1300 320,1360 280,1350", "770,850 790,830 800,860 780,870", "1410,1345 1425,1340 1420,1360", "600,785 635,785 630,800 605,800", "90,1060 70,1110 90,1130"],
  wet: ["1080,370 1090,325 1110,370 1130,390 1150,430 1130,430 1120,400 1090,390", "700,300 740,295 735,310 705,340"],
  park: ["470,1420 520,1430 540,1480 640,1480 670,1510 440,1510 440,1470", "840,1150 880,1160 860,1190 835,1180"],
  urban: ["200,910 250,905 260,960 210,970", "560,900 605,925 600,960 530,1005 490,1000 510,950 530,910", "350,1090 390,1090 380,1130 330,1150 320,1080", "410,1350 470,1330 480,1420 410,1460", "560,1490 640,1380 650,1430 580,1521", "340,1000 400,1010 410,1050 370,1050", "920,420 950,425 930,455"],
  water: ["920,390 950,405 970,370 995,360 985,400 960,425 925,410", "470,1440 510,1430 530,1470 500,1500 465,1490", "285,1480 320,1490 330,1521 280,1510", "1400,1455 1420,1460 1400,1470"],
  over: ["300,40 345,45 380,60 360,110 320,110 280,140 260,170 230,180 240,150 280,110 300,80"],
};

const LABELS = [
  ["Liberty Hill", 178, 56, 10], ["Georgetown", 356, 80, 10], ["Leander", 226, 133, 10], ["Cedar Park", 247, 177, 10],
  ["Round Rock", 355, 189, 13], ["Pflugerville", 398, 247, 10], ["Lakeway", 131, 310, 10], ["Manor", 445, 329, 10],
  ["Austin", 308, 390, 14], ["Dripping Springs", 58, 457, 10], ["Elgin", 579, 323, 10], ["Rockdale", 845, 64, 10], ["Giddings", 896, 463, 10],
];
const HALO = { paintOrder: "stroke", stroke: "rgba(255,255,255,0.75)", strokeWidth: 2, strokeLinejoin: "round" };

function Region({ data, children }) {
  const line = (key, color, width, how = smooth, extra = {}) =>
    (data[key] || []).map((s, i) => (
      <path key={key + i} d={how(s)} stroke={color} strokeWidth={width} vectorEffect="non-scaling-stroke" {...extra} />
    ));
  const area = (key, color, extra = {}) =>
    (data[key] || []).map((s, i) => <path key={key + i} d={wobble(s, 0.35, true)} fill={color} vectorEffect="non-scaling-stroke" {...extra} />);
  const curl = (s) => wobble(s, 0.6, false);
  const soft = (s) => wobble(s, 0.18, false);
  return (
    <g fill="none" strokeLinejoin="round">
      {area("urban", "#dad8d7")}
      {area("wood", "#b9d8ab")}
      {area("wet", "#d3ddb5")}
      {area("park", "#c8facc")}
      {children}
      {area("forest", "#a9d3a2", { stroke: "#86c08b", strokeWidth: 2.5 })}
      {area("over", "#aad3df")}
      {line("county", "#c6a5c9", 1, (s) => soft(s), { strokeDasharray: "7 2 2 2", opacity: 0.8 })}
      {line("creek", "#a5cfdf", 1.3, curl)}
      {line("blue", "#8fa5cc", 1.5, curl)}
      {line("dash", "#a5cfdf", 1.2, curl, { strokeDasharray: "5 3" })}
      {line("lake", "#aad3df", 5, curl)}
      {line("river", "#aad3df", 2, soft)}
      {line("wide", "#aad3df", 8, soft)}
      {area("water", "#aad3df")}
      {line("minor", "#b9b7b9", 0.8, soft)}
      {line("rail", "#85827f", 1)}
      {line("primary", "#f8c27a", 1.5)}
      {line("trunk", "#f0917c", 1.9)}
      {line("brown", "#a1564c", 1)}
      {line("motorway", "#de6684", 2.2)}
    </g>
  );
}

function Shield({ x, y, w, children }) {
  return (
    <g>
      <rect x={x} y={y} width={w} height="17" rx="1.500" fill="#eccbd0" stroke="#d79aa6" />
      <text x={x + w / 2} y={y + 12} textAnchor="middle" fontSize="10" fill="#5e1431">{children}</text>
    </g>
  );
}

const urbanStreets =
  streets(930, 560, 250, 190, 22, 0.35, 5) + streets(960, 1040, 190, 260, 18, 0.4, 9) + streets(840, 1370, 150, 140, 20, 0.7, 11) +
  streets(1080, 250, 110, 110, 24, 0.2, 13) + streets(390, 950, 90, 70, 20, 0.6, 17) + streets(760, 440, 90, 90, 24, 0.2, 19) +
  streets(1180, 760, 100, 110, 30, 0.5, 23) + streets(1130, 1080, 130, 140, 28, 0.3, 29) + streets(680, 1180, 120, 200, 34, 0.6, 33);
const ruralRoads = streets(420, 700, 600, 820, 75, 0.5, 41) + streets(1350, 700, 230, 830, 90, 0.2, 43);
const blocks = patches(900, 600, 320, 340, 150, 24, 3) + patches(920, 1180, 300, 300, 140, 22, 7) + patches(1060, 250, 130, 160, 40, 18, 21) +
  patches(330, 900, 280, 560, 90, 20, 31) + patches(620, 160, 250, 130, 50, 16, 37) + patches(1350, 1200, 200, 260, 34, 16, 39) +
  patches(560, 900, 220, 200, 70, 20, 45);
const greens = patches(640, 850, 200, 260, 110, 20, 51) + patches(980, 900, 330, 420, 110, 13, 53) + patches(300, 1200, 220, 220, 36, 20, 57) +
  patches(1360, 1250, 190, 250, 66, 17, 59) + patches(820, 330, 300, 180, 50, 18, 61) + patches(640, 1050, 130, 150, 50, 22, 63) +
  patches(620, 1360, 160, 120, 30, 20, 65);
const mint = patches(900, 900, 400, 480, 90, 10, 71) + patches(1380, 1150, 180, 330, 60, 14, 73) + patches(200, 800, 160, 500, 24, 14, 77);
const ponds = patches(1380, 1200, 180, 260, 30, 6, 81) + patches(700, 900, 460, 500, 40, 5, 83);

function MapCanvas() {
  return (
    <svg width="1000" height="500" viewBox="0 0 1000 500" className="block" role="img" aria-label="Map of the Austin area" fontFamily="Noto Sans, sans-serif">
      <rect width="1000" height="500" fill="#f1eee8" />
      <g transform="translate(-7 -7) scale(0.33333)">
        <Region data={W}>
          <path d={blocks} fill="#d6d4d3" opacity="0.7" />
          <path d={greens} fill="#b9d9aa" opacity="0.75" />
          <path d={mint} fill="#cdf0c4" opacity="0.8" />
          <path d={ponds} fill="#aad3df" />
          <path d={ruralRoads} stroke="#c9c6c6" strokeWidth="1.800" />
          <path d={urbanStreets} stroke="#bfbcbd" strokeWidth="2" />
        </Region>
      </g>
      <g transform="translate(483 -7) scale(0.338 0.33333)">
        <Region data={E}>
          <path d={patches(250, 1250, 200, 260, 26, 10, 91)} fill="#c5e3b6" />
          <path d={patches(230, 1050, 180, 200, 16, 12, 93)} fill="#d9d7d6" />
          <path d={streets(440, 1390, 50, 90, 17, 0.1, 95) + streets(200, 1150, 150, 200, 60, 0.5, 97) + streets(1075, 200, 30, 40, 12, 0.3, 99)} stroke="#c2bfc0" strokeWidth="2" />
        </Region>
        <path d="m560 905 30 30M592 905l-32 32" stroke="#efecea" strokeWidth="5" />
      </g>
      <g color="#8461c4">
        <MdLocalAirport x="349" y="33" size={14} />
        <MdLocalAirport x="359" y="443" size={14} />
        <MdLocalAirport x="850" y="73" size={14} />
        <MdLocalAirport x="858" y="463" size={14} />
      </g>
      <g textAnchor="middle" fill="#2b2b2b" style={HALO}>
        {LABELS.map(([t, x, y, s]) => <text key={t} x={x} y={y} fontSize={s}>{t}</text>)}
      </g>
      <g textAnchor="middle" fontSize="10" fontStyle="italic" style={HALO}>
        <g fill="#2f8f3f">
          {["Balcones", "Canyonlands", "National", "Wildlife", "Refuge"].map((t, i) => <text key={t} x="117" y={130 + i * 12}>{t}</text>)}
          {["Granger", "Wildlife", "Management", "Area"].map((t, i) => <text key={t} x="588" y={18 + i * 12}>{t}</text>)}
        </g>
        <g fill="#a07ba8">
          <text x="388" y="51">Williamson</text>
          <text x="388" y="63">County</text>
          <text x="281" y="335">Travis County</text>
          <text x="931" y="369">Lee County</text>
        </g>
        <text x="64" y="225" fill="#5f8fc4">Lake Travis</text>
      </g>
      <Shield x={270} y={241} w={46}>US 183</Shield>
      <Shield x={281} y={432} w={32}>I 35</Shield>
      <Shield x={180} y={465} w={52}>45 Toll</Shield>
      <rect x="331" y="496" width="76" height="17" rx="1.500" fill="#eccbd0" stroke="#d79aa6" />
    </svg>
  );
}

function LeafletMap() {
  return (
    <section className="relative h-[500px] w-[1000px] shrink-0 overflow-hidden font-['Liberation_Sans',sans-serif]">
      <MapCanvas />
      <div className="absolute top-[10px] left-[10px] overflow-hidden rounded border-2 border-black/20 bg-white bg-clip-padding">
        {["+", "−"].map((s, i) => (
          <button key={s} type="button" aria-label={i ? "Zoom out" : "Zoom in"} className={"flex w-[30px] items-center justify-center pt-1 text-black " + (i ? "h-[30px]" : "h-[31px] border-b border-[#ccc]")}>
            <svg width="12" height="12" viewBox="0 0 12 12" stroke="currentColor" strokeWidth="2">
              <path d={i ? "M0 6h12" : "M0 6h12M6 0v12"} />
            </svg>
          </button>
        ))}
      </div>
      <button type="button" aria-label="Alaskan Malamute marker" className="absolute top-[208px] left-[487px] rounded-sm border-2 border-[#0b4fb3]">
        <svg width="22" height="39" viewBox="0 0 22 39" className="block">
          <path d="m13 35 9-14v12z" fill="#000" opacity="0.25" />
          <path d="M11 1C5 1 .8 5 .8 11 .8 17 6 22 11 38 16 22 21.200 17 21.200 11 21.200 5 17 1 11 1z" fill="#2f82c8" stroke="#2468a4" />
          <circle cx="11" cy="12" r="4" fill="#fff" />
        </svg>
      </button>
      <div className="absolute top-[206px] left-[365px] flex h-8 w-[113px] items-center justify-center rounded-[3px] bg-white text-[12px] whitespace-nowrap text-[#222] shadow-md">
        Alaskan Malamute
        <span className="absolute top-[10px] left-[113px] border-6 border-transparent border-l-white" />
      </div>
      <div className="absolute top-[98px] left-[395px] h-[105px] w-[212px] rounded-xl bg-white px-[21px] pt-5 text-[#333] shadow-[0_3px_14px_rgba(0,0,0,0.4)]">
        <h1 className="text-[26px] leading-8 font-bold whitespace-nowrap">Animal Name</h1>
        <p className="mt-4 text-[13px] leading-5">Papa</p>
        <button type="button" aria-label="Close popup" className="absolute top-2 right-2 text-[#757575]">
          <svg width="9" height="9" viewBox="0 0 9 9" stroke="currentColor" strokeWidth="1.500" className="block"><path d="m.5.5 8 8M8.500.5l-8 8" /></svg>
        </button>
        <svg width="28" height="12" viewBox="0 0 28 12" fill="#fff" className="absolute top-[104px] left-[92px]"><path d="M0 0h28L14 12z" /></svg>
      </div>
      <div className="absolute right-0 bottom-0 flex h-[17px] items-center gap-1 bg-white/80 px-[5px] text-[12px]">
        <svg width="12" height="8" viewBox="0 0 12 8"><path d="M0 0h12v4H0z" fill="#4c7be1" /><path d="M0 4h12v4H0z" fill="#ffd500" /></svg>
        <a href="#leaflet" className="text-[#0078a8]">Leaflet</a>
      </div>
    </section>
  );
}

/* ----------------------------------- page ----------------------------------- */

const FILTERS = [
  "Water Rescue (Labrador, Chesapeake Bay Retriever, Newfoundland - Intact Female, 26-156 weeks)",
  "Mountain/Wilderness Rescue (German Shepherd, Alaskan Malamute, Old English Sheepdog, Siberian Husky, Rottweiler - Intact Male, 26-156 weeks)",
  "Disaster Rescue or Individual Tracking (Doberman Pinscher, German Shepherd, Golden Retriever, Bloodhound, Rottweiler - Intact Male, 20-300 weeks)",
  "Reset (Show All Animals)",
];
const RULE = "border-t border-b border-t-[#9a9a9a] border-b-[#ececec]";

export default function App() {
  return (
    <div className="bg-white">
      <Chrome />
      <main className="mr-[2px] overflow-hidden border-r border-b border-[#dcdcdc] pt-2 pr-2 pl-[7px] font-['Liberation_Serif',serif]">
        <section className="flex flex-col items-center rounded-[10px] bg-[#ebf0f0] pt-5 pb-8 text-center">
          <Logo />
          <h1 className="mt-5 text-[32px] leading-9 font-bold text-[#2c3e50]">Grazioso Salvare Animal Rescue Dashboard</h1>
          <p className="mt-[21px] text-[16px] leading-5 text-[#7f8c8d] italic">Dashboard by Rick Goshen</p>
          <p className="mt-[14px] text-[14px] leading-5 text-[#95a5a6]">CS 340 - Client/Server Development</p>
        </section>
        <hr className={RULE + " mt-5"} />
        <fieldset className="mt-2 rounded-[10px] bg-[#f8f9fb] px-5 pt-10 pb-[39px]">
          <h3 className="text-[19px] leading-5 font-bold text-[#34495e]">Select Rescue Type Filter:</h3>
          <div className="mt-[31px] flex flex-col pl-5">
            {FILTERS.map((f, i) => (
              <label key={f} className="flex h-[30px] items-center gap-[7px] text-[16px] whitespace-nowrap text-black">
                <input type="radio" name="rescue" defaultChecked={i === 1} className="mb-1 size-[13px] shrink-0" />
                {f}
              </label>
            ))}
          </div>
        </fieldset>
        <hr className={RULE + " mt-5"} />
        <DataTable />
        <Pagination />
        <hr className={RULE + " mt-[31px]"} />
        <div className="mt-2 flex items-start">
          <Pie />
          <LeafletMap />
        </div>
      </main>
    </div>
  );
}
